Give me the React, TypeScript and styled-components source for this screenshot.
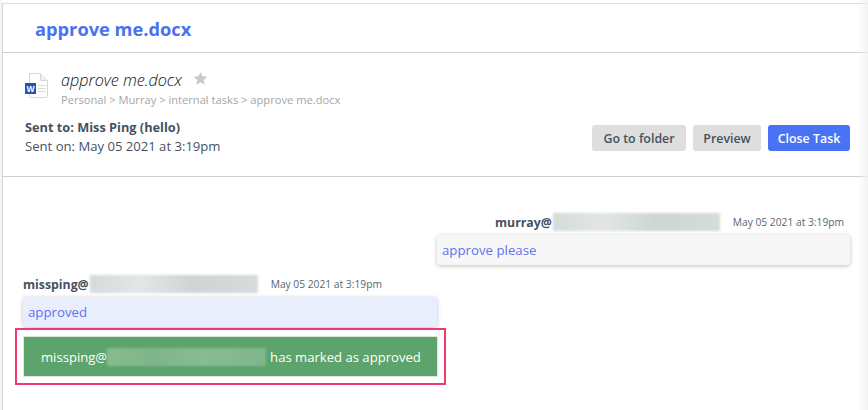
import React from 'react';
import styled, { createGlobalStyle } from 'styled-components';

const GlobalStyle = createGlobalStyle`
  html, body {
    margin: 0;
    padding: 0;
    background: #fff;
    overflow: hidden;
  }
  body {
    font-family: 'Open Sans', 'Lato', sans-serif;
  }
`;

const StarIcon = () => (
  <svg width="15" height="15" viewBox="0 0 24 24" aria-hidden="true">
    <path
      d="M12 1.5l3.2 7 7.6.8-5.7 5.1 1.6 7.5L12 18.1l-6.7 3.8 1.6-7.5L1.2 9.3l7.6-.8z"
      fill="#c9c9c9"
    />
  </svg>
);

const WordIcon = () => (
  <svg width="23" height="25" viewBox="0 0 23 25" aria-hidden="true">
    <path d="M4.500 .5h11l7 7v16a1 1 0 0 1-1 1h-16a1 1 0 0 1-1-1z" fill="#fff" stroke="#d6d6d6" />
    <path d="M15.500 .5v7h7" fill="#f1f1f1" stroke="#d6d6d6" />
    <path d="M13 12.500h8M13 15.500h8M13 18.500h8" stroke="#dcdcdc" />
    <rect x="0" y="10" width="11" height="11" fill="#1f57b0" />
    <text x="5.500" y="18.500" textAnchor="middle" fontSize="8.500" fontWeight="700" fontFamily="Liberation Sans, sans-serif" fill="#fff">W</text>
  </svg>
);

const App: React.FC = () => (
  <Page>
    <GlobalStyle />
    <Panel>
      <TitleBar>
        <Title>approve me.docx</Title>
      </TitleBar>
      <Details>
        <DetailsInfo>
          <FileRow>
            <IconSlot>
              <WordIcon />
            </IconSlot>
            <FileText>
              <FileNameRow>
                <FileName>approve me.docx</FileName>
                <StarIcon />
              </FileNameRow>
              <Breadcrumb>Personal &gt; Murray &gt; internal tasks &gt; approve me.docx</Breadcrumb>
            </FileText>
          </FileRow>
          <SentTo>Sent to: Miss Ping (hello)</SentTo>
          <SentOn>Sent on: May 05 2021 at 3:19pm</SentOn>
        </DetailsInfo>
        <Actions>
          <ActionButton $width={94}>Go to folder</ActionButton>
          <ActionButton $width={68}>Preview</ActionButton>
          <ActionButton $width={82} $primary>Close Task</ActionButton>
        </Actions>
      </Details>
      <Thread>
        <SentMessage>
          <MessageHead>
            <Sender>murray@</Sender>
            <Redacted $width={167} />
            <Stamp>May 05 2021 at 3:19pm</Stamp>
          </MessageHead>
          <Bubble>approve please</Bubble>
        </SentMessage>
        <ReceivedMessage>
          <MessageHead>
            <Sender>missping@</Sender>
            <Redacted $width={168} />
            <Stamp>May 05 2021 at 3:19pm</Stamp>
          </MessageHead>
          <Bubble $received>approved</Bubble>
          <Highlight>
            <StatusBar>
              missping@
              <Redacted $width={159} $light />
              <StatusText>has marked as approved</StatusText>
            </StatusBar>
          </Highlight>
        </ReceivedMessage>
      </Thread>
    </Panel>
  </Page>
);

const Page = styled.div`
  position: relative;
  width: 868px;
  height: 410px;
  padding: 3px 0 0 2px;
  box-sizing: border-box;
  overflow: hidden;
  background: #fff;
  box-shadow: inset 2px 0 0 #f5f5f5;

  /* soft fade down the right edge */
  &::after {
    content: '';
    position: absolute;
    top: 0;
    right: 0;
    bottom: 0;
    width: 10px;
    background: linear-gradient(90deg, rgba(240, 240, 240, 0), rgba(240, 240, 240, 0.8));
    pointer-events: none;
  }
`;

const Panel = styled.div`
  border-top: 1px solid #dedede;
  border-left: 1px solid #d6d6d6;
  height: 100%;
  box-sizing: border-box;
`;

const TitleBar = styled.div`
  height: 49px;
  box-sizing: border-box;
  padding: 12px 0 0 32px;
  border-bottom: 1px solid #cfcfcf;
`;

const Title = styled.h1`
  margin: 0;
  font-size: 18.25px;
  line-height: 26px;
  font-weight: 700;
  color: #4a72f0;
`;

const Details = styled.div`
  height: 124px;
  box-sizing: border-box;
  padding: 17px 18px 0 22px;
  border-bottom: 1px solid #cfcfcf;
  display: flex;
  justify-content: space-between;
`;

const DetailsInfo = styled.div`
  display: flex;
  flex-direction: column;
`;

const FileRow = styled.div`
  display: flex;
  align-items: flex-start;
`;

const IconSlot = styled.div`
  width: 36px;
  padding-top: 3px;
  display: flex;
  justify-content: flex-start;
`;

const FileText = styled.div`
  display: flex;
  flex-direction: column;
`;

const FileNameRow = styled.div`
  display: flex;
  align-items: center;
  gap: 11px;
  & > svg {
    margin-top: -4px;
  }
`;

const FileName = styled.span`
  font-size: 16.2px;
  line-height: 20px;
  font-style: italic;
  font-weight: 300;
  color: #111;
`;

const Breadcrumb = styled.div`
  font-size: 11.15px;
  line-height: 14px;
  margin-top: 3px;
  color: #a6a6a6;
`;

const SentTo = styled.div`
  margin-top: 11px;
  font-size: 12.75px;
  line-height: 18px;
  font-weight: 700;
  color: #44525f;
`;

const SentOn = styled.div`
  margin-top: 1px;
  font-size: 13.1px;
  line-height: 18px;
  color: #44525f;
`;

const Actions = styled.div`
  display: flex;
  gap: 7px;
  margin-top: 55px;
  align-self: flex-start;
`;

const ActionButton = styled.div<{ $primary?: boolean; $width: number }>`
  width: ${(p) => p.$width}px;
  height: 26px;
  display: flex;
  align-items: center;
  justify-content: center;
  border-radius: 3px;
  font-size: 12.4px;
  font-weight: 600;
  white-space: nowrap;
  background: ${(p) => (p.$primary ? '#4a72f5' : '#dedede')};
  color: ${(p) => (p.$primary ? '#fff' : '#44525f')};
`;

const Thread = styled.div`
  padding: 36px 18px 0 20px;
  display: flex;
  flex-direction: column;
`;

const SentMessage = styled.div`
  align-self: flex-end;
  width: 413px;
  display: flex;
  flex-direction: column;
`;

const ReceivedMessage = styled.div`
  width: 414px;
  margin-top: 10px;
  display: flex;
  flex-direction: column;
`;

const MessageHead = styled.div`
  display: flex;
  align-items: center;
  height: 18px;
  ${SentMessage} & {
    justify-content: flex-end;
    padding-right: 6px;
  }
`;

const Sender = styled.span`
  font-size: 12.3px;
  font-weight: 700;
  color: #44525f;
  margin-right: 1px;
`;

const Redacted = styled.span<{ $width: number; $light?: boolean }>`
  display: inline-block;
  flex: none;
  width: ${(p) => p.$width}px;
  height: 18px;
  filter: blur(1px);
  background: ${(p) =>
    p.$light
      ? 'linear-gradient(90deg, #86bb8f, #7fb58a 30%, #88bb92 60%, #80b68b)'
      : 'linear-gradient(90deg, #d5dada, #e3e6e6 30%, #cfd5d5 60%, #d6dbdb)'};
`;

const Stamp = styled.span`
  margin-left: 13px;
  font-size: 10.25px;
  color: #5a6672;
`;

const Bubble = styled.div<{ $received?: boolean }>`
  margin-top: 4px;
  height: 30px;
  box-sizing: border-box;
  padding: 0 5px;
  display: flex;
  align-items: center;
  border-radius: 4px;
  font-size: 13.25px;
  color: #6272f0;
  background: ${(p) => (p.$received ? '#e8eefc' : '#f7f7f7')};
  box-shadow: 0 1px 4px rgba(0, 0, 0, 0.25);
`;

const Highlight = styled.div`
  margin: 1px 0 0 -8px;
  width: 431px;
  height: 57px;
  box-sizing: border-box;
  border: 2px solid #ee3a6e;
  padding: 6px 6px;
`;

const StatusBar = styled.div`
  height: 41px;
  box-sizing: border-box;
  border: 1px solid #dfe5df;
  background: #5ca46c;
  color: #fff;
  font-size: 13.1px;
  padding-left: 17px;
  display: flex;
  align-items: center;
`;

const StatusText = styled.span`
  margin-left: 4px;
`;

export default App;
